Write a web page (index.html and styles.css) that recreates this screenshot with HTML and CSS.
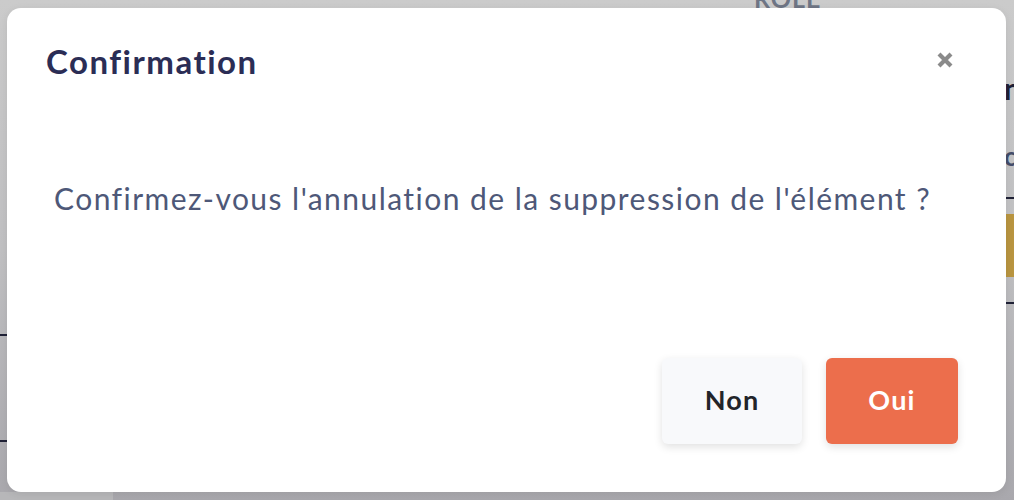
FILE: index.html
```html
<!DOCTYPE html>
<html lang="fr">
<head>
<meta charset="utf-8">
<title>Confirmation</title>
<link rel="stylesheet" href="styles.css">
</head>
<body>
<div class="backdrop">
  <span class="bg-role">ROLE</span>
  <span class="bg-n">n</span>
  <span class="bg-c">c</span>
  <span class="bg-line bg-line-r1"></span>
  <span class="bg-gold"></span>
  <span class="bg-line bg-line-r2"></span>
  <span class="bg-line bg-line-l1"></span>
  <span class="bg-line bg-line-l2"></span>
  <span class="bg-bottom-left"></span>
</div>
<div class="overlay">
  <div class="dialog" role="dialog" aria-labelledby="dlg-title">
    <div class="dialog-header">
      <h2 class="dialog-title" id="dlg-title">Confirmation</h2>
      <button class="close-btn" aria-label="Fermer">
        <svg width="18" height="18" viewBox="0 0 18 18" aria-hidden="true">
          <path d="M3 3 L15 15 M15 3 L3 15" stroke="#8a8a8a" stroke-width="4.2" stroke-linecap="butt"/>
        </svg>
      </button>
    </div>
    <div class="dialog-body">
      <p class="dialog-message">Confirmez-vous l'annulation de la suppression de l'élément ?</p>
    </div>
    <div class="dialog-footer">
      <button class="btn btn-secondary">Non</button>
      <button class="btn btn-primary">Oui</button>
    </div>
  </div>
</div>
</body>
</html>
```
FILE: styles.css
```css
html, body {
  margin: 0;
  padding: 0;
  height: 100%;
}
body {
  font-family: Lato, "Open Sans", sans-serif;
  background: linear-gradient(#cbcbcb 0%, #c0c0c2 50%, #a9a8ad 100%);
  position: relative;
  overflow: hidden;
}
.backdrop {
  position: absolute;
  inset: 0;
  z-index: 0;
}
.backdrop > * {
  position: absolute;
}
.bg-role {
  left: 754px;
  top: -17px;
  font-size: 25px;
  font-weight: 700;
  color: #6e7585;
  letter-spacing: 1px;
}
.bg-n {
  left: 1004px;
  top: 70px;
  font-size: 30px;
  font-weight: 700;
  color: #1e2036;
}
.bg-c {
  left: 1004px;
  top: 140px;
  font-size: 26px;
  font-weight: 700;
  color: #444d6a;
}
.bg-line {
  height: 2px;
  background: #1f2136;
}
.bg-line-r1 { left: 1006px; width: 8px; top: 197px; }
.bg-line-r2 { left: 1006px; width: 8px; top: 302px; }
.bg-line-l1 { left: 0; width: 7px; top: 334px; }
.bg-line-l2 { left: 0; width: 7px; top: 440px; }
.bg-gold {
  left: 1006px;
  top: 214px;
  width: 8px;
  height: 63px;
  background: #b99540;
}
.bg-bottom-left {
  left: 0;
  top: 492px;
  width: 113px;
  height: 8px;
  background: #b7b7b9;
}
.overlay {
  position: relative;
  z-index: 1;
  padding: 8px 8px 8px 7px;
  box-sizing: border-box;
  height: 100%;
}
.dialog {
  background: #ffffff;
  border-radius: 14px;
  height: 484px;
  box-sizing: border-box;
  display: flex;
  flex-direction: column;
  padding: 0 48px 48px 39px;
  box-shadow: 0 2px 8px rgba(0,0,0,0.08);
}
.dialog-header {
  display: flex;
  align-items: center;
  justify-content: space-between;
  height: 110px;
}
.dialog-title {
  margin: -4px 0 0;
  font-size: 33px;
  font-weight: 700;
  letter-spacing: 1.5px;
  color: #2b2d55;
}
.close-btn {
  background: none;
  border: 0;
  padding: 0;
  width: 18px;
  height: 18px;
  display: flex;
  margin-right: 4px;
  margin-top: -6px;
}
.dialog-body {
  flex: 1;
  padding-left: 8px;
}
.dialog-message {
  margin: 62px 0 0;
  font-size: 30px;
  letter-spacing: 1.45px;
  color: #4e5878;
  line-height: 36px;
}
.dialog-footer {
  display: flex;
  justify-content: flex-end;
  gap: 24px;
}
.btn {
  font-family: inherit;
  font-size: 27px;
  font-weight: 700;
  letter-spacing: 1.2px;
  height: 86px;
  padding: 0 0 4px;
  border: 0;
  border-radius: 6px;
  cursor: pointer;
}
.btn-secondary {
  width: 140px;
  background: #f8f9fb;
  color: #222429;
  box-shadow: 0 3px 8px rgba(0,0,0,0.12);
}
.btn-primary {
  width: 132px;
  background: #ec6e4c;
  color: #ffffff;
  box-shadow: 0 3px 8px rgba(0,0,0,0.12);
}
```
